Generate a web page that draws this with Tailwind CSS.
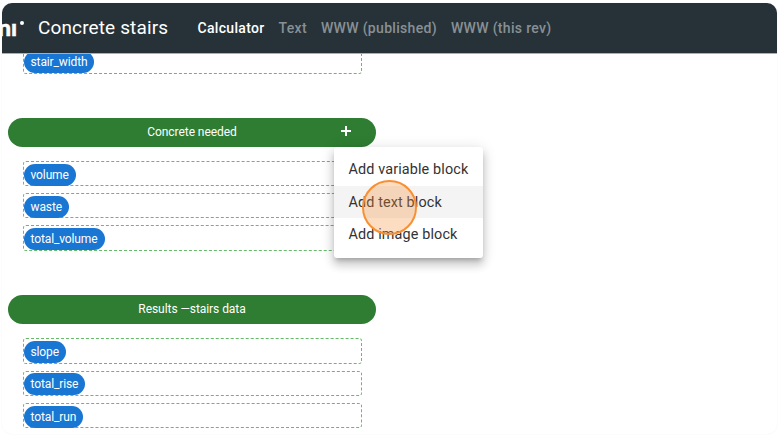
<!DOCTYPE html>
<html lang="en">
<head>
<meta charset="utf-8">
<title>Concrete stairs</title>
<script src="https://cdn.jsdelivr.net/npm/@tailwindcss/browser@4"></script>
</head>
<body class="bg-white w-[779px] h-[438px] overflow-hidden pt-[3px] pl-[2px] font-[Roboto,sans-serif]">
<div class="w-[775px] h-[431px] rounded-[10px] overflow-hidden bg-white shadow-[0_0_2px_rgba(0,0,0,0.06)] flex flex-col">
  <header class="h-[50px] shrink-0 bg-[#263238] flex items-center text-white whitespace-nowrap relative z-10 shadow-[0_1px_0_#a9aeb3]">
    <div class="w-[36px] h-[50px] relative overflow-hidden shrink-0">
      <span class="absolute left-[-4px] top-[11px] text-[23px] leading-[26px] font-black font-[Lato,sans-serif] [-webkit-text-stroke:0.5px_white]">nı</span>
      <span class="absolute left-[18px] top-[18px] size-[4px] rounded-full bg-white"></span>
    </div>
    <h1 class="w-[159.5px] text-[19px] leading-[50px] tracking-[0.13px]">Concrete stairs</h1>
    <nav class="flex gap-[14px] text-[14px] font-medium tracking-[0.32px] text-[#899095]">
      <a class="text-white">Calculator</a><a>Text</a><a>WWW (published)</a><a>WWW (this rev)</a>
    </nav>
  </header>
  <main class="flex-1 overflow-hidden pl-[6px] text-[12px] tracking-[-0.12px] text-white">
    <section class="w-[368px] -mt-[5px]">
      <div class="ml-[15px] w-[339px] h-[26px] rounded-[3px] border border-dashed border-[#66bb6a] flex items-end"><span class="h-[22px] leading-[22px] px-[7px] -ml-[0.5px] rounded-full bg-[#1976d2]">stair_width</span></div>
    </section>
    <section class="w-[368px] mt-[44px]">
      <div class="h-[28.5px] mb-[0.5px] pb-[1px] tracking-[-0.06px] rounded-full bg-[#2e7d32] flex items-center justify-center relative">Concrete needed
        <svg class="absolute left-[332.5px] top-[8px]" width="10" height="10" viewBox="0 0 10 10" stroke="#fff" stroke-width="2"><path d="M5 0v10M0 5h10"/></svg>
      </div>
      <div class="mt-[14px] ml-[15px] w-[339px] grid gap-y-[7px] grid-rows-[25px_25px_26px]">
        <div class="rounded-[3px] border border-dashed border-[#66bb6a] flex items-end"><span class="h-[22px] leading-[22px] px-[7px] -ml-[0.5px] -mb-[1px] rounded-full bg-[#1976d2]">volume</span></div>
        <div class="rounded-[3px] border border-dashed border-[#66bb6a] flex items-end"><span class="h-[22px] leading-[22px] px-[7px] -ml-[0.5px] -mb-[1px] rounded-full bg-[#1976d2]">waste</span></div>
        <div class="rounded-[3px] border border-dashed border-[#66bb6a] flex items-end"><span class="h-[22px] leading-[22px] px-[7px] -ml-[0.5px] rounded-full bg-[#1976d2]">total_volume</span></div>
      </div>
    </section>
    <section class="w-[368px] mt-[44px]">
      <div class="h-[29px] pb-[1px] tracking-[-0.06px] rounded-full bg-[#2e7d32] flex items-center justify-center">Results —stairs data</div>
      <div class="mt-[14px] ml-[15px] w-[339px] grid gap-y-[7px] grid-rows-[26px_25px_25px]">
        <div class="rounded-[3px] border border-dashed border-[#66bb6a] flex items-end"><span class="h-[22px] leading-[22px] px-[7px] -ml-[0.5px] rounded-full bg-[#1976d2]">slope</span></div>
        <div class="rounded-[3px] border border-dashed border-[#66bb6a] flex items-end"><span class="h-[22px] leading-[22px] px-[7px] -ml-[0.5px] rounded-full bg-[#1976d2]">total_rise</span></div>
        <div class="rounded-[3px] border border-dashed border-[#66bb6a] flex items-end"><span class="h-[22px] leading-[22px] px-[7px] -ml-[0.5px] -mb-[1px] rounded-full bg-[#1976d2]">total_run</span></div>
      </div>
    </section>
  </main>
</div>
<div class="absolute left-[334px] top-[147px] w-[149px] h-[111px] py-[7px] rounded-[3px] bg-white text-[14.4px] tracking-[0.13px] text-[#333] whitespace-nowrap shadow-[0_4px_4px_-2px_rgba(0,0,0,0.2),0_7px_9px_1px_rgba(0,0,0,0.14),0_2px_14px_1px_rgba(0,0,0,0.12)]">
  <div class="h-[32px] leading-[32px] pl-[14.5px]">Add variable block</div>
  <div class="h-[32px] leading-[34px] pl-[14.5px] bg-[#f4f4f4]">Add text block</div>
  <div class="h-[33px] leading-[34px] pl-[14.5px]">Add image block</div>
</div>
<div class="absolute left-[362px] top-[180px] size-[55px] rounded-full border-2 border-[#f98f33] bg-[#f98f33]/30"></div>
</body>
</html>
